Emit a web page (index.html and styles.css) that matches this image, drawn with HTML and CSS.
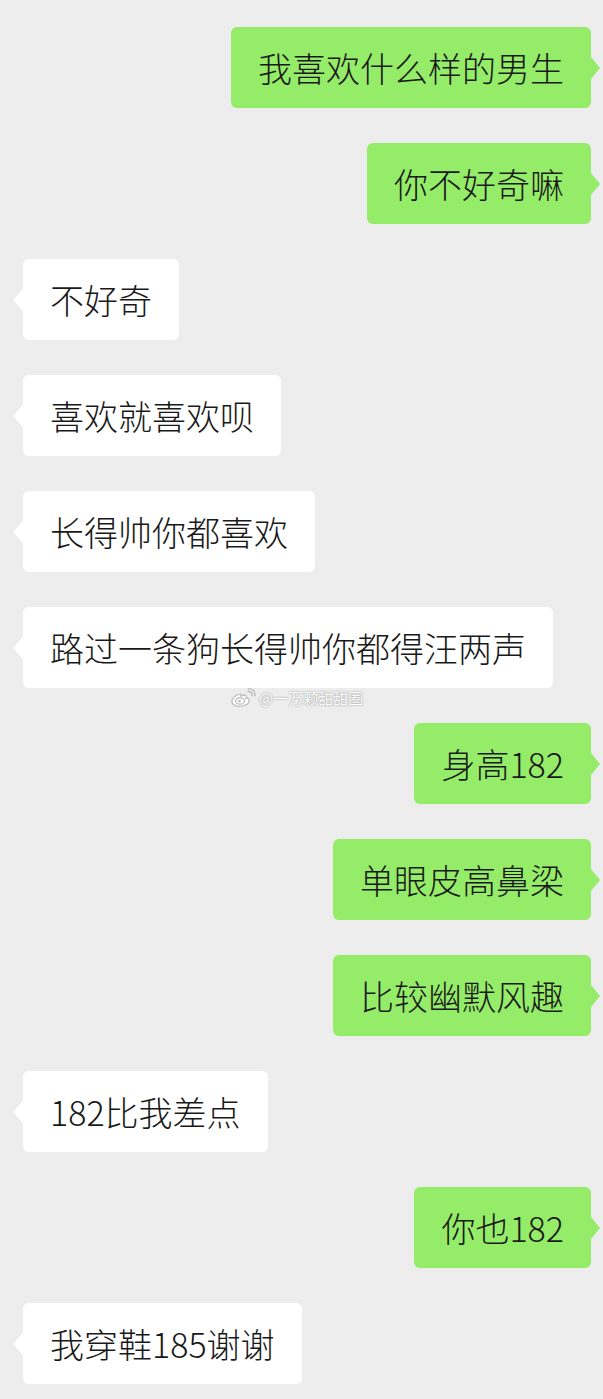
FILE: index.html
```html
<!DOCTYPE html>
<html lang="zh">
<head>
    <meta charset="UTF-8">
    <title>聊天记录</title>
    <link rel="stylesheet" href="styles.css">
</head>
<body>
    <main class="chat">
        <div class="msg mine"><div class="bubble">我喜欢什么样的男生</div></div>
        <div class="msg mine"><div class="bubble">你不好奇嘛</div></div>
        <div class="msg theirs"><div class="bubble">不好奇</div></div>
        <div class="msg theirs"><div class="bubble">喜欢就喜欢呗</div></div>
        <div class="msg theirs"><div class="bubble">长得帅你都喜欢</div></div>
        <div class="msg theirs"><div class="bubble">路过一条狗长得帅你都得汪两声</div></div>
        <div class="msg mine"><div class="bubble">身高182</div></div>
        <div class="msg mine"><div class="bubble">单眼皮高鼻梁</div></div>
        <div class="msg mine"><div class="bubble">比较幽默风趣</div></div>
        <div class="msg theirs"><div class="bubble">182比我差点</div></div>
        <div class="msg mine"><div class="bubble">你也182</div></div>
        <div class="msg theirs"><div class="bubble">我穿鞋185谢谢</div></div>

        <!-- 水印 -->
        <div class="watermark">
            <svg class="weibo" width="26" height="20" viewBox="0 0 26 20">
                <path d="M10 6c-5 1-9 5-8 8.5 1 3.5 6 4.5 10.5 3.5 4.5-1 7-3.5 6.5-6-.4-1.8-2-2-3-1.6.8-2 .2-3.4-2-3.2-1.4.1-2.6.8-3 1 .4-1.6-.2-2.4-1-2.2z" fill="#fff" stroke="#bbb" stroke-width="1.2"/>
                <ellipse cx="10" cy="13" rx="4.5" ry="3.2" fill="none" stroke="#bbb" stroke-width="1.2"/>
                <circle cx="9.5" cy="13.3" r="1.3" fill="#bbb"/>
                <path d="M18 3.5c2.5-.4 4.6 1.6 4.2 4.2" fill="none" stroke="#bbb" stroke-width="1.4" stroke-linecap="round"/>
                <path d="M18.5 1c4-.6 7 2.6 6.3 6.6" fill="none" stroke="#bbb" stroke-width="1.4" stroke-linecap="round"/>
            </svg>
            <span>@一万颗甜甜圈</span>
        </div>
    </main>
</body>
</html>
```

FILE: styles.css
```css
/* 聊天页面 */

:root {
    --bg-color: #EDEDED;
    --mine-color: #95EC69;
    --theirs-color: #FFFFFF;
    --text-color: #191919;
}

body {
    margin: 0;
    background-color: var(--bg-color);
    color: var(--text-color);
    font-family: "Noto Sans CJK SC", "Noto Sans", sans-serif;
}

.chat {
    position: relative;
    display: flex;
    flex-direction: column;
    gap: 35px;
    padding: 27px 12px 15px 23px;
}

.msg {
    display: flex;
}

.msg.mine {
    justify-content: flex-end;
}

.msg.theirs {
    justify-content: flex-start;
}

.bubble {
    position: relative;
    padding: 20px 27px;
    font-size: 34px;
    font-weight: 300;
    line-height: 41px;
    border-radius: 6px;
    white-space: nowrap;
}

.mine .bubble {
    background-color: var(--mine-color);
}

.theirs .bubble {
    background-color: var(--theirs-color);
}

/* хвостик пузыря */
.bubble::after {
    content: "";
    position: absolute;
    top: 50%;
    margin-top: -11px;
    border-top: 11px solid transparent;
    border-bottom: 11px solid transparent;
}

.mine .bubble::after {
    right: -9px;
    border-left: 9px solid var(--mine-color);
}

.theirs .bubble::after {
    left: -10px;
    border-right: 10px solid var(--theirs-color);
}

.watermark {
    position: absolute;
    top: 688px;
    left: 230px;
    display: flex;
    align-items: center;
    gap: 3px;
    font-size: 15px;
    line-height: 20px;
    color: #ffffff;
    text-shadow: 0 0 2px #9a9a9a, 0 0 1px #b0b0b0;
}
```
